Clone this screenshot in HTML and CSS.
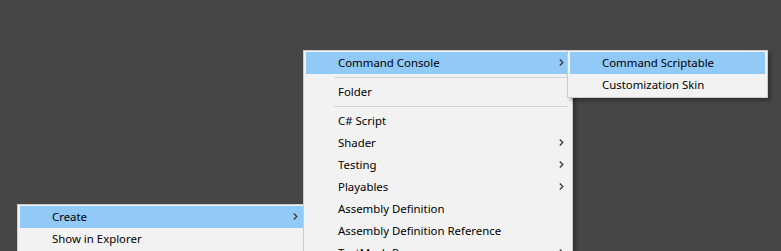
FILE: index.html
```html
<!DOCTYPE html>
<html lang="en">
<head>
    <meta charset="UTF-8">
    <title>Context Menu</title>
    <link rel="stylesheet" href="styles.css">
</head>
<body>
    <div class="desk">
        <!-- project window context menu -->
        <div class="menu menu-root">
            <div class="menu-item active">Create<span class="arrow"><svg width="5" height="7" viewBox="0 0 5 7"><polyline points="0.8,0.5 3.8,3.5 0.8,6.5"/></svg></span></div>
            <div class="menu-item">Show in Explorer</div>
            <div class="menu-item">Open</div>
        </div>

        <!-- Create submenu -->
        <div class="menu menu-create">
            <div class="menu-item active">Command Console<span class="arrow"><svg width="5" height="7" viewBox="0 0 5 7"><polyline points="0.8,0.5 3.8,3.5 0.8,6.5"/></svg></span></div>
            <div class="menu-sep"></div>
            <div class="menu-item">Folder</div>
            <div class="menu-sep"></div>
            <div class="menu-item">C# Script</div>
            <div class="menu-item">Shader<span class="arrow"><svg width="5" height="7" viewBox="0 0 5 7"><polyline points="0.8,0.5 3.8,3.5 0.8,6.5"/></svg></span></div>
            <div class="menu-item">Testing<span class="arrow"><svg width="5" height="7" viewBox="0 0 5 7"><polyline points="0.8,0.5 3.8,3.5 0.8,6.5"/></svg></span></div>
            <div class="menu-item">Playables<span class="arrow"><svg width="5" height="7" viewBox="0 0 5 7"><polyline points="0.8,0.5 3.8,3.5 0.8,6.5"/></svg></span></div>
            <div class="menu-item">Assembly Definition</div>
            <div class="menu-item">Assembly Definition Reference</div>
            <div class="menu-item">TextMesh Pro<span class="arrow"><svg width="5" height="7" viewBox="0 0 5 7"><polyline points="0.8,0.5 3.8,3.5 0.8,6.5"/></svg></span></div>
        </div>

        <!-- Command Console submenu -->
        <div class="menu menu-console">
            <div class="menu-item active">Command Scriptable</div>
            <div class="menu-item">Customization Skin</div>
        </div>
    </div>
</body>
</html>
```

FILE: styles.css
```css
html, body {
    margin: 0;
    padding: 0;
    overflow: hidden;
}

body {
    background: #464646;
    font-family: "Noto Sans", "Open Sans", sans-serif;
    font-size: 11.4px;
    color: #000;
}

.desk {
    position: relative;
    width: 781px;
    height: 251px;
    overflow: hidden;
}

.menu {
    position: absolute;
    background: #f2f2f2;
    border: 1px solid #cbcbcb;
    padding: 1px 2px;
    box-shadow: 3px 3px 3px rgba(0, 0, 0, 0.28);
}

.menu-root {
    left: 17px;
    top: 204px;
    width: 284px;
    z-index: 1;
}

.menu-create {
    left: 303px;
    top: 50px;
    width: 264px;
    z-index: 2;
}

.menu-console {
    left: 567px;
    top: 50px;
    width: 195px;
    z-index: 3;
}

.menu-item {
    display: flex;
    align-items: center;
    box-sizing: border-box;
    height: 22px;
    padding: 0 0 1px 32px;
    white-space: nowrap;
}

.menu-item.active {
    background: #91c9f7;
}

.arrow {
    margin-left: auto;
    margin-right: 6px;
    display: flex;
}

.arrow polyline {
    fill: none;
    stroke: #3a3a3a;
    stroke-width: 1.3;
}

.menu-sep {
    height: 1px;
    margin: 3px 2px 3px 28px;
    background: #d2d2d2;
}
```
